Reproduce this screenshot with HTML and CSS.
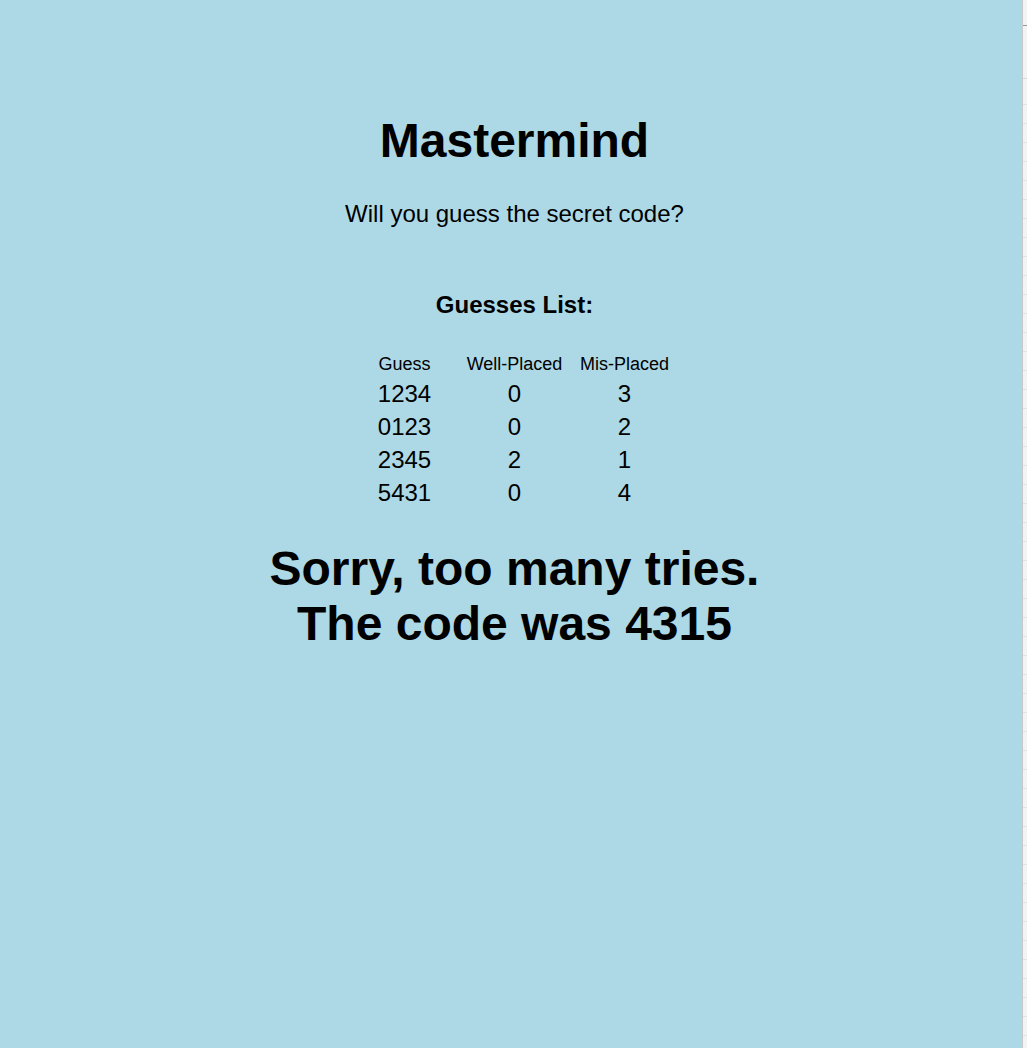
FILE: index.html
```html
<!DOCTYPE html>
<html lang="en">
<head>
<meta charset="utf-8">
<title>Mastermind</title>
<link rel="stylesheet" href="styles.css">
</head>
<body>
<main class="game">
  <h1 class="title">Mastermind</h1>
  <p class="subtitle">Will you guess the secret code?</p>
  <h3 class="list-title">Guesses List:</h3>
  <table class="guesses">
    <thead>
      <tr><th>Guess</th><th>Well-Placed</th><th>Mis-Placed</th></tr>
    </thead>
    <tbody>
      <tr><td>1234</td><td>0</td><td>3</td></tr>
      <tr><td>0123</td><td>0</td><td>2</td></tr>
      <tr><td>2345</td><td>2</td><td>1</td></tr>
      <tr><td>5431</td><td>0</td><td>4</td></tr>
    </tbody>
  </table>
  <h1 class="result">Sorry, too many tries.<br>The code was 4315</h1>
</main>
<div class="edge"></div>
</body>
</html>
```
FILE: styles.css
```css
html, body {
  margin: 0;
  padding: 0;
  height: 100%;
}
body {
  background: #add8e6;
  color: #000;
  font-family: "Liberation Sans", Arial, Helvetica, sans-serif;
  overflow: hidden;
}
.game {
  display: flex;
  flex-direction: column;
  align-items: center;
  padding-top: 113px;
  padding-left: 2px;
  text-align: center;
}
.title {
  margin: 0;
  font-size: 48px;
  font-weight: bold;
  line-height: normal;
}
.subtitle {
  margin: 32px 0 0;
  font-size: 24px;
  line-height: normal;
}
.list-title {
  margin: 63px 0 0;
  font-size: 24px;
  font-weight: bold;
  line-height: normal;
}
.guesses {
  margin-top: 33px;
  border-collapse: collapse;
  border-spacing: 0;
}
.guesses th,
.guesses td {
  width: 110px;
  padding: 0;
  text-align: center;
}
.guesses th {
  font-size: 18px;
  font-weight: normal;
  line-height: 25px;
}
.guesses td {
  font-size: 24px;
  line-height: 33px;
}
.result {
  margin: 32px 0 0;
  font-size: 48px;
  font-weight: bold;
  line-height: normal;
}
.edge {
  position: absolute;
  top: 0;
  right: 0;
  width: 4px;
  height: 100%;
  border-left: 1px solid #c9c9c9;
  background:
    linear-gradient(#9a9a9a, #9a9a9a) 0 25px / 100% 1px no-repeat,
    linear-gradient(#d9d9d9, #d9d9d9) 0 78px / 100% 1px no-repeat,
    repeating-linear-gradient(to bottom, transparent 0, transparent 18px, #e2e2e2 18px, #e2e2e2 19px) 0 86px / 100% calc(100% - 86px) no-repeat,
    #f3f3f3;
}
```
